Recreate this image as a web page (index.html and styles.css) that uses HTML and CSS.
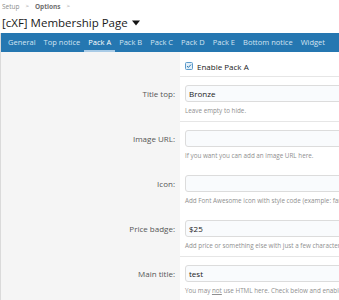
FILE: index.html
```html
<!DOCTYPE html>
<html>
<head>
<meta charset="utf-8">
<link rel="stylesheet" href="styles.css">
</head>
<body>
<div class="page">
  <div class="crumbs">
    <span class="crumb">Setup</span>
    <span class="sep">&gt;</span>
    <span class="crumb crumb-bold">Options</span>
    <span class="sep">&gt;</span>
  </div>
  <h1 class="title">[cXF] Membership Page <svg class="caret" width="8" height="6" viewBox="0 0 8 6"><path d="M0 0.5 L8 0.5 L4 5.5 Z" fill="#141414"/></svg></h1>
  <div class="block">
    <nav class="tabs">
      <span class="tab">General</span>
      <span class="tab">Top notice</span>
      <span class="tab tab-active">Pack A</span>
      <span class="tab">Pack B</span>
      <span class="tab">Pack C</span>
      <span class="tab">Pack D</span>
      <span class="tab">Pack E</span>
      <span class="tab">Bottom notice</span>
      <span class="tab">Widget</span>
    </nav>
    <div class="form">
      <div class="row row-check">
        <div class="label"></div>
        <div class="field field-sep">
          <label class="check">
            <svg class="box" width="8" height="8" viewBox="0 0 8 8"><rect x="0.5" y="0.5" width="7" height="7" rx="1" fill="#e3eff8" stroke="#5d9bcb"/><path d="M2 4.1 L3.4 5.4 L6 2.6" fill="none" stroke="#2577b1" stroke-width="1"/></svg>
            <span>Enable Pack A</span>
          </label>
        </div>
      </div>
      <div class="row">
        <div class="label">Title top:</div>
        <div class="field field-sep">
          <div class="input">Bronze</div>
          <div class="hint">Leave empty to hide.</div>
        </div>
      </div>
      <div class="row">
        <div class="label">Image URL:</div>
        <div class="field">
          <div class="input"></div>
          <div class="hint">If you want you can add an image URL here.</div>
        </div>
      </div>
      <div class="row">
        <div class="label">Icon:</div>
        <div class="field">
          <div class="input"></div>
          <div class="hint">Add Font Awesome icon with style code (example: far fa-star)</div>
        </div>
      </div>
      <div class="row">
        <div class="label">Price badge:</div>
        <div class="field field-sep">
          <div class="input">$25</div>
          <div class="hint">Add price or something else with just a few characters.</div>
        </div>
      </div>
      <div class="row">
        <div class="label">Main title:</div>
        <div class="field">
          <div class="input">test</div>
          <div class="hint">You may <u>not</u> use HTML here. Check below and enable it.</div>
        </div>
      </div>
    </div>
  </div>
</div>
</body>
</html>
```
FILE: styles.css
```css
html, body {
  margin: 0;
  padding: 0;
  background: #ffffff;
  overflow: hidden;
}
body {
  font-family: "Open Sans", "Noto Sans", sans-serif;
  color: #141414;
  width: 339px;
  height: 300px;
}
.page {
  width: 460px;
}
.crumbs {
  height: 12px;
  padding-left: 2px;
  display: flex;
  align-items: center;
  gap: 6px;
  font-size: 6.5px;
  color: #8c8c8c;
}
.crumb-bold {
  font-weight: 700;
  color: #707070;
}
.sep {
  font-size: 6px;
}
.title {
  margin: 0;
  height: 21px;
  padding-left: 2px;
  padding-top: 1px;
  box-sizing: border-box;
  font-size: 11.5px;
  font-weight: 400;
  line-height: 20px;
  display: flex;
  align-items: center;
  gap: 4px;
  color: #1a1a1a;
}
.block {
  border-left: 1px solid #dadada;
}
.tabs {
  height: 19px;
  background: #2577b1;
  display: flex;
  align-items: stretch;
  padding-left: 3px;
}
.tab {
  display: flex;
  align-items: center;
  padding: 1px 4px 0;
  font-size: 7.5px;
  color: #d3e4f1;
  border-bottom: 2px solid transparent;
}
.tab-active {
  color: #ffffff;
  border-bottom-color: #a9cbe6;
}
.form {
  display: flex;
  flex-direction: column;
}
.row {
  display: flex;
  background: #f5f5f5;
}
.label {
  width: 179px;
  flex: none;
  box-sizing: border-box;
  padding: 8px 5px 0 0;
  text-align: right;
  font-size: 8px;
  line-height: 17px;
  color: #555555;
}
.field {
  flex: 1;
  background: #ffffff;
  padding: 8px 0 6px 5px;
  border-bottom: 1px solid transparent;
}
.field-sep {
  border-bottom-color: #e6e6e6;
}
.row-check .field {
  padding-top: 9px;
  padding-bottom: 5px;
}
.check {
  display: flex;
  align-items: center;
  gap: 4px;
  height: 10px;
  font-size: 8px;
  color: #1a1a1a;
}
.input {
  height: 17px;
  box-sizing: border-box;
  border: 1px solid #dcdcdc;
  border-radius: 3px;
  background: #f9fbfd;
  font-size: 8px;
  line-height: 15px;
  padding-left: 3px;
  color: #1a1a1a;
}
.hint {
  margin-top: 4px;
  height: 9px;
  line-height: 9px;
  font-size: 6.3px;
  color: #8f8f8f;
  white-space: nowrap;
}
```
